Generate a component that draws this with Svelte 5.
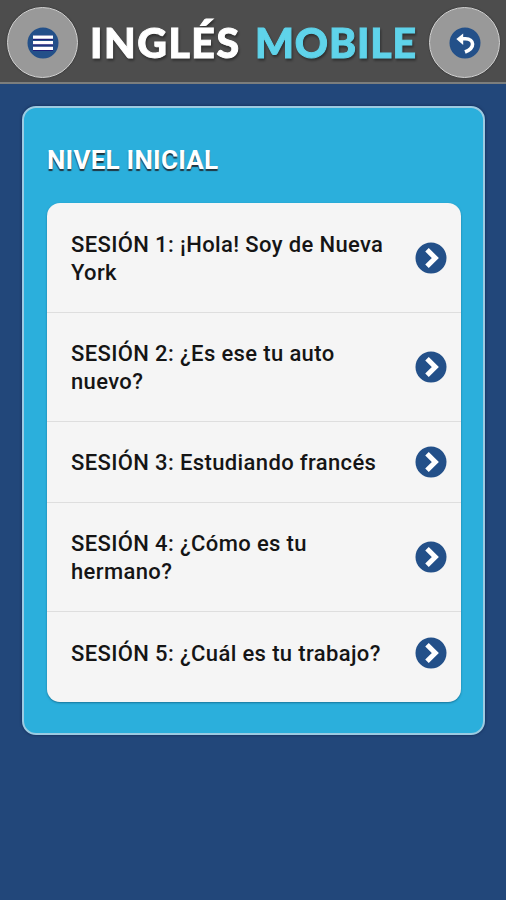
<script>
	export let level = 'NIVEL INICIAL';

	const sessions = [
		{ id: 1, title: '¡Hola! Soy de Nueva York' },
		{ id: 2, title: '¿Es ese tu auto nuevo?' },
		{ id: 3, title: 'Estudiando francés' },
		{ id: 4, title: '¿Cómo es tu hermano?' },
		{ id: 5, title: '¿Cuál es tu trabajo?' }
	];
</script>

<div class="page">
	<header class="topbar">
		<button class="round-btn" aria-label="Menú">
			<svg viewBox="0 0 32 32" width="32" height="32">
				<circle cx="16" cy="16" r="15.5" fill="#235089" />
				<path d="M6 10.7h20M6 16.2h20M6 21.9h20" stroke="#1c1c78" stroke-width="4.4" />
				<path d="M6 10.2h20M6 15.7h20M6 21.4h20" stroke="#fff" stroke-width="3.3" />
			</svg>
		</button>
		<svg class="logo" viewBox="0 0 340 80" width="340" height="80">
			<text x="4" y="56" textLength="149">INGLÉS</text>
			<text class="accent" x="169" y="56" textLength="161">MOBILE</text>
		</svg>
		<button class="round-btn" aria-label="Volver">
			<svg viewBox="0 0 32 32" width="32" height="32">
				<circle cx="16" cy="16" r="15.5" fill="#235089" />
				<path d="M12 11.8H16.5C25.5 12.3 26.5 20.8 16 25" fill="none" stroke="#fff" stroke-width="3.6" />
				<path d="M7.3 12L14.2 6.4V17.9Z" fill="#fff" />
			</svg>
		</button>
	</header>

	<main class="panel">
		<h1>{level}</h1>
		<ul class="sessions">
			{#each sessions as session (session.id)}
				<li>
					<span class="title">SESIÓN {session.id}: {session.title}</span>
					<svg class="arrow" viewBox="0 0 32 32" width="32" height="32">
						<circle cx="16" cy="16" r="15.5" fill="#235089" />
						<path d="M12 7.8L20.3 16L12 24.2" fill="none" stroke="#fff" stroke-width="5" />
					</svg>
				</li>
			{/each}
		</ul>
	</main>
</div>

<style>
	:global(body) {
		margin: 0;
		background: #22477a;
	}

	.page {
		min-height: 900px;
		background: #22477a;
		font-family: Roboto, sans-serif;
		overflow: hidden;
	}

	.topbar {
		display: flex;
		align-items: center;
		justify-content: space-between;
		box-sizing: border-box;
		height: 84px;
		padding: 0 7px;
		background: #4d4d4d;
		border-bottom: 2px solid #7c7e7d;
	}

	.round-btn {
		display: flex;
		align-items: center;
		justify-content: center;
		flex: none;
		box-sizing: border-box;
		width: 71px;
		height: 71px;
		margin-top: 3px;
		padding: 0;
		border: 1.5px solid #d2d2d2;
		border-radius: 50%;
		background: #999;
		box-shadow: 0 0 2px rgba(0, 0, 0, 0.4);
	}

	.logo {
		flex: none;
		margin: 2px 3px 0 8px;
		font-family: Lato, sans-serif;
		font-size: 41px;
		font-weight: 900;
		filter: drop-shadow(1px 2px 1px rgba(0, 0, 0, 0.4));
	}

	.logo text {
		fill: #fff;
		stroke: #fff;
		stroke-width: 1px;
	}

	.logo .accent {
		fill: #5fd3ea;
		stroke: #5fd3ea;
	}

	.panel {
		box-sizing: border-box;
		width: 463px;
		height: 629px;
		margin: 22px 0 0 22px;
		padding: 37px 23px 0;
		border: 2px solid #9ccbe2;
		border-radius: 14px;
		background: #2bafdc;
		box-shadow: 0 0 3px rgba(0, 0, 40, 0.5);
	}

	h1 {
		margin: 0;
		font-size: 26px;
		line-height: 30px;
		font-weight: 700;
		letter-spacing: 0.25px;
		color: #fff;
		text-shadow: 0 1.5px 1px #1f3540;
	}

	.sessions {
		width: 414px;
		margin: 28px 0 0;
		padding: 0;
		list-style: none;
		border-radius: 13px;
		background: #f5f5f5;
		box-shadow: 0 1px 2px rgba(0, 60, 90, 0.5);
	}

	li {
		display: flex;
		align-items: center;
		justify-content: space-between;
		padding: 26px 14px 26px 24px;
		border-bottom: 1px solid #dedede;
	}

	li:first-child {
		padding-top: 27px;
	}

	li:last-child {
		padding-top: 27px;
		padding-bottom: 35px;
		border-bottom: none;
	}

	.title {
		position: relative;
		top: 1px;
		width: 326px;
		font-size: 22px;
		line-height: 28px;
		font-weight: 500;
		letter-spacing: 0.37px;
		color: #151515;
	}

	/* the icon is taller than one text line and must not stretch the row */
	.arrow {
		flex: none;
		margin: -2px 0;
	}
</style>
